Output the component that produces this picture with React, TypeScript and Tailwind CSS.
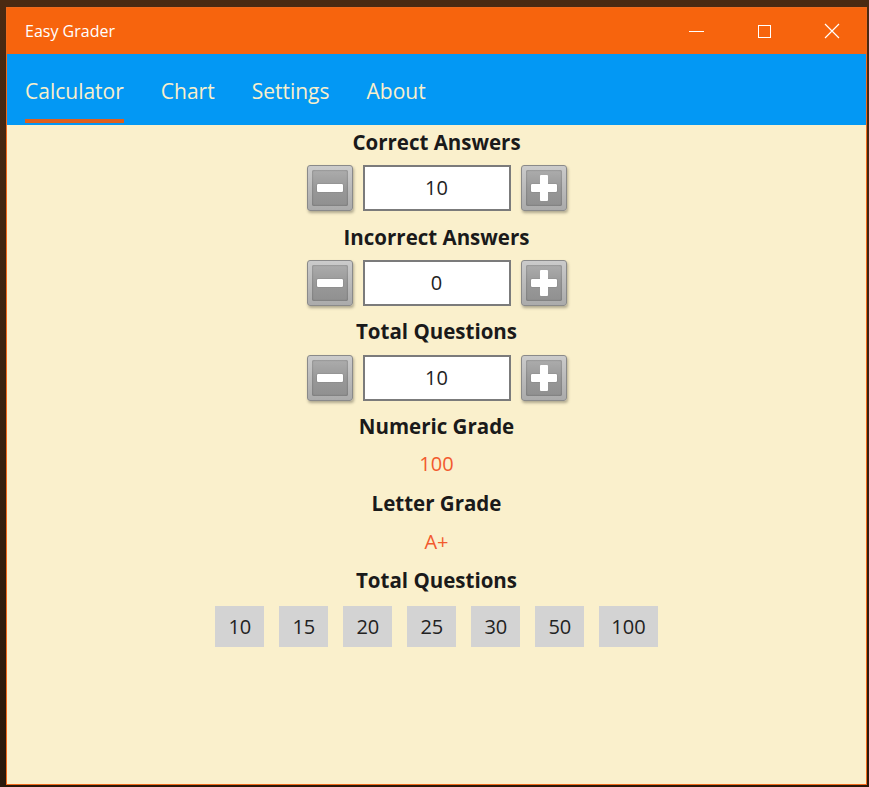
import { useState } from "react";

const font = { fontFamily: '"Open Sans", "Noto Sans", sans-serif' };

function StepButton({ kind }: { kind: "minus" | "plus" }) {
  return (
    <button
      type="button"
      className="flex h-[46px] w-[46px] items-center justify-center rounded-[3px] border border-[#8a8a8a] bg-gradient-to-b from-[#cbcbcb] to-[#ababab] p-[4px] shadow-[1px_2px_3px_rgba(0,0,0,0.3)]"
    >
      <span className="relative flex h-full w-full items-center justify-center rounded-[2px] bg-gradient-to-b from-[#acacac] via-[#999] to-[#909090] shadow-[inset_0_0_2px_rgba(0,0,0,0.35)]">
        <span className="absolute h-[8px] w-[26px] rounded-[1px] bg-white shadow-[0_0_1px_rgba(0,0,0,0.5)]" />
        {kind === "plus" ? (
          <span className="absolute h-[26px] w-[8px] rounded-[1px] bg-white" />
        ) : null}
      </span>
    </button>
  );
}

function Stepper({ value }: { value: number }) {
  return (
    <div className="flex items-center gap-[10px]">
      <StepButton kind="minus" />
      <div className="flex h-[46px] w-[148px] items-center justify-center border-2 border-[#7b7b7b] bg-white text-[20px] text-[#222]">
        {value}
      </div>
      <StepButton kind="plus" />
    </div>
  );
}

function Heading({ children, className = "" }: { children: string; className?: string }) {
  return (
    <h2 className={`text-[20.5px] font-bold leading-[24px] text-[#1a1a1a] ${className}`}>
      {children}
    </h2>
  );
}

export default function App() {
  const [tab, setTab] = useState("Calculator");
  const tabs = ["Calculator", "Chart", "Settings", "About"];
  const presets = [10, 15, 20, 25, 30, 50, 100];

  return (
    <div
      className="h-[787px] w-[869px] overflow-hidden bg-gradient-to-b from-[#4a2a12] via-[#3a2210] to-[#2a180b] pl-[6px] pt-[7px]"
      style={font}
    >
      <div className="flex h-[778px] w-[861px] flex-col border border-[#f06a1c] bg-[#faf0cc]">
        {/* title bar */}
        <div className="flex h-[46px] items-center justify-between bg-[#f7640d] pl-[18px] text-white">
          <span className="text-[16px]">Easy Grader</span>
          <div className="flex h-full items-center">
            <div className="flex h-full w-[68px] items-center justify-center">
              <span className="h-[1px] w-[15px] bg-white" />
            </div>
            <div className="flex h-full w-[68px] items-center justify-center">
              <span className="h-[13px] w-[13px] border border-white" />
            </div>
            <div className="flex h-full w-[68px] items-center justify-center">
              <svg width="16" height="16" viewBox="0 0 16 16" stroke="white" strokeWidth="1.2">
                <path d="M1 1 L15 15 M15 1 L1 15" />
              </svg>
            </div>
          </div>
        </div>

        {/* nav */}
        <nav className="flex h-[71px] items-stretch gap-[37px] bg-[#0398f4] pl-[18px]">
          {tabs.map((t) => (
            <button
              key={t}
              type="button"
              onClick={() => setTab(t)}
              className="relative flex items-center pt-[4px] text-[21px] text-[#f9efcb]"
            >
              {t}
              {tab === t ? (
                <span className="absolute bottom-[2px] left-0 right-0 h-[4px] bg-[#e0601c]" />
              ) : null}
            </button>
          ))}
        </nav>

        {/* calculator */}
        <main className="flex flex-col items-center pt-[5px]">
          <Heading>Correct Answers</Heading>
          <div className="mt-[11px]">
            <Stepper value={10} />
          </div>
          <Heading className="mt-[14px]">Incorrect Answers</Heading>
          <div className="mt-[11px]">
            <Stepper value={0} />
          </div>
          <Heading className="mt-[13px]">Total Questions</Heading>
          <div className="mt-[12px]">
            <Stepper value={10} />
          </div>
          <Heading className="mt-[13px]">Numeric Grade</Heading>
          <p className="mt-[14px] text-[20px] leading-[24px] text-[#f25a2e]">100</p>
          <Heading className="mt-[15px]">Letter Grade</Heading>
          <p className="mt-[15px] text-[20px] leading-[24px] text-[#f25a2e]">A+</p>
          <Heading className="mt-[14px]">Total Questions</Heading>
          <div className="mt-[14px] flex gap-[15px]">
            {presets.map((n) => (
              <button
                key={n}
                type="button"
                className="flex h-[41px] min-w-[49px] items-center justify-center bg-[#d3d3d3] px-[12px] text-[20px] text-[#222]"
              >
                {n}
              </button>
            ))}
          </div>
        </main>
      </div>
    </div>
  );
}
